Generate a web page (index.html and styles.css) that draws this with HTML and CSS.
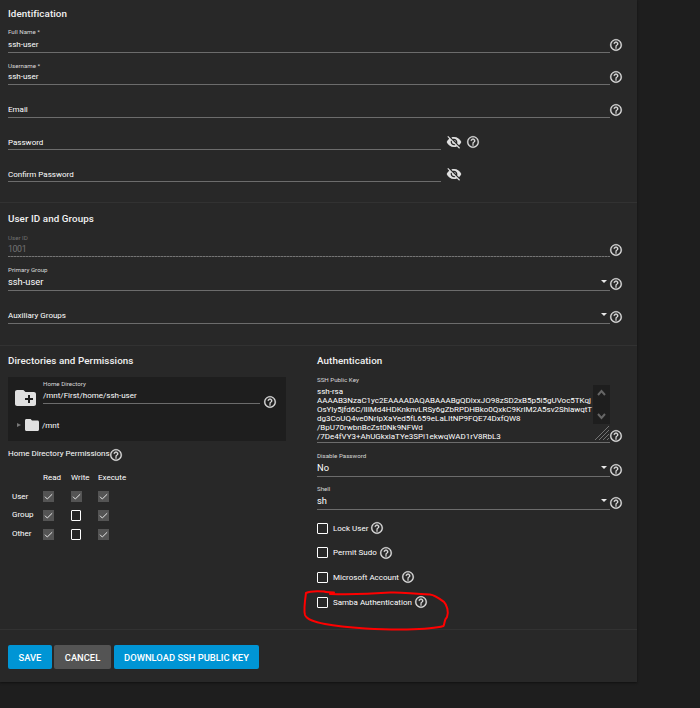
FILE: index.html
```html
<!DOCTYPE html>
<html lang="en">
<head>
<meta charset="utf-8">
<title>Edit User</title>
<link rel="stylesheet" href="styles.css">
</head>
<body>
<svg class="defs" width="0" height="0">
  <symbol id="help" viewBox="0 0 24 24"><path d="M11 18h2v-2h-2v2zm1-16C6.48 2 2 6.48 2 12s4.48 10 10 10 10-4.48 10-10S17.52 2 12 2zm0 18c-4.41 0-8-3.59-8-8s3.59-8 8-8 8 3.59 8 8-3.59 8-8 8zm0-14c-2.21 0-4 1.79-4 4h2c0-1.1.9-2 2-2s2 .9 2 2c0 2-3 1.75-3 5h2c0-2.25 3-2.5 3-5 0-2.21-1.79-4-4-4z"/></symbol>
  <symbol id="eye-off" viewBox="0 0 24 24"><path d="M12 7c2.76 0 5 2.24 5 5 0 .65-.13 1.26-.36 1.83l2.92 2.92c1.51-1.26 2.7-2.89 3.43-4.75-1.73-4.39-6-7.5-11-7.5-1.4 0-2.74.25-3.98.7l2.16 2.16C10.74 7.13 11.35 7 12 7zM2 4.27l2.28 2.28.46.46C3.08 8.3 1.78 10.02 1 12c1.73 4.39 6 7.5 11 7.5 1.55 0 3.03-.3 4.38-.84l.42.42L19.73 22 21 20.73 3.27 3 2 4.27zM7.53 9.8l1.55 1.55c-.05.21-.08.43-.08.65 0 1.66 1.34 3 3 3 .22 0 .44-.03.65-.08l1.55 1.55c-.67.33-1.41.53-2.2.53-2.76 0-5-2.24-5-5 0-.79.2-1.53.53-2.2zm4.31-.78l3.15 3.15.02-.16c0-1.66-1.34-3-3-3l-.17.01z"/></symbol>
  <symbol id="folder" viewBox="2 4 20 16" preserveAspectRatio="none"><path d="M10 4H4c-1.100 0-2 .9-2 2v12c0 1.100.9 2 2 2h16c1.100 0 2-.9 2-2V8c0-1.100-.9-2-2-2h-8l-2-2z"/></symbol>
  <symbol id="check" viewBox="0 0 11 11"><path d="M2 5.700l2.300 2.300L9.200 3.200" fill="none" stroke="#e6e6e6" stroke-width="1"/></symbol>
</svg>
<main class="card">
  <section class="section identification">
    <h2>Identification</h2>
    <div class="field f-name"><div class="control"><label>Full Name *</label><span class="value">ssh-user</span></div><svg class="help"><use href="#help"/></svg></div>
    <div class="field f-user"><div class="control"><label>Username *</label><span class="value">ssh-user</span></div><svg class="help"><use href="#help"/></svg></div>
    <div class="field f-email"><div class="control"><span class="value">Email</span></div><svg class="help"><use href="#help"/></svg></div>
    <div class="field f-pass"><div class="control short"><span class="value">Password</span></div><svg class="eye"><use href="#eye-off"/></svg><svg class="help"><use href="#help"/></svg></div>
    <div class="field f-pass"><div class="control short"><span class="value">Confirm Password</span></div><svg class="eye"><use href="#eye-off"/></svg></div>
  </section>

  <section class="section groups">
    <h2>User ID and Groups</h2>
    <div class="field f-uid disabled"><div class="control"><label>User ID</label><span class="value">1001</span></div><svg class="help"><use href="#help"/></svg></div>
    <div class="field f-primary select"><div class="control"><label>Primary Group</label><span class="value">ssh-user</span><i class="caret"></i></div><svg class="help"><use href="#help"/></svg></div>
    <div class="field f-aux select"><div class="control"><span class="value placeholder">Auxiliary Groups</span><i class="caret"></i></div><svg class="help"><use href="#help"/></svg></div>
  </section>

  <section class="section columns">
    <div class="left">
      <h2>Directories and Permissions</h2>
      <div class="explorer">
        <div class="home">
          <div class="folder-add"><svg class="folder-lg"><use href="#folder"/></svg><i class="plus"></i></div>
          <div class="home-control"><label>Home Directory</label><span class="value">/mnt/First/home/ssh-user</span></div>
          <svg class="help"><use href="#help"/></svg>
        </div>
        <div class="node"><i class="expand"></i><svg class="folder-sm"><use href="#folder"/></svg><span>/mnt</span></div>
      </div>
      <div class="perm-title"><span>Home Directory Permissions</span><svg class="help"><use href="#help"/></svg></div>
      <div class="perms">
        <span></span><b>Read</b><b>Write</b><b>Execute</b>
        <span>User</span><i class="box on"><svg><use href="#check"/></svg></i><i class="box on"><svg><use href="#check"/></svg></i><i class="box on"><svg><use href="#check"/></svg></i>
        <span class="up">Group</span><i class="box on"><svg><use href="#check"/></svg></i><i class="box"></i><i class="box on"><svg><use href="#check"/></svg></i>
        <span class="up">Other</span><i class="box on"><svg><use href="#check"/></svg></i><i class="box"></i><i class="box on"><svg><use href="#check"/></svg></i>
      </div>
    </div>
    <div class="right">
      <h2>Authentication</h2>
      <div class="field f-ssh">
        <div class="control">
          <label>SSH Public Key</label>
          <div class="key"><span>ssh-rsa</span><span>AAAAB3NzaC1yc2EAAAADAQABAAABgQDlxxJO98zSD2xB5p5i5gUVoc5TKqj</span><span class="long">OsYIy5jfd6C/lIIMd4HDKnknvLRSy6gZbRPDHBko0QxkC9KrlM2A5sv2ShiawqtT</span><span>dg3CoUQ4ve0NrIpXaYed5fL659eLaLItNP9FQE74DxfQW8</span><span>/BpU70rwbnBcZst0Nk9NFWd</span><span>/7De4fVY3+AhUGkxiaTYe3SPi1ekwqWAD1rV8RbL3</span></div>
          <div class="scroll"><svg viewBox="0 0 17 18"><path d="M5 10l3.500-4 3.500 4"/></svg><svg viewBox="0 0 17 18"><path d="M5 8l3.500 4L12 8"/></svg></div>
          <svg class="grip" viewBox="0 0 15 15"><path d="M0 14L14 0M4 14L14 4M8 14L14 8M12 14L14 12"/></svg>
        </div>
        <svg class="help"><use href="#help"/></svg>
      </div>
      <div class="field f-disable select"><div class="control"><label>Disable Password</label><span class="value">No</span><i class="caret"></i></div><svg class="help"><use href="#help"/></svg></div>
      <div class="field f-shell select"><div class="control"><label>Shell</label><span class="value">sh</span><i class="caret"></i></div><svg class="help"><use href="#help"/></svg></div>
      <div class="options">
        <div class="option"><i class="box"></i><span>Lock User</span><svg class="help"><use href="#help"/></svg></div>
        <div class="option"><i class="box"></i><span>Permit Sudo</span><svg class="help"><use href="#help"/></svg></div>
        <div class="option"><i class="box"></i><span>Microsoft Account</span><svg class="help"><use href="#help"/></svg></div>
        <div class="option"><i class="box"></i><span>Samba Authentication</span><svg class="help"><use href="#help"/></svg>
          <svg class="scribble" viewBox="300 585 152 50"><path d="M334 592.500C330 592 326 592.500 324 591.500C318 591 310 591 306 593C305 600 303.500 610 305 615C307 620 315 622 325 624C345 628 385 630 407 629.500C425 629 440 627 443.500 626C445 623 444 620 447 617C449 612 447 605 444 602C440 599 435 595 430 594.500C405 593 400 592 390 592.500C370 594 345 594.500 330 594"/></svg>
        </div>
      </div>
    </div>
  </section>

  <footer class="actions">
    <button class="save">SAVE</button><button class="cancel">CANCEL</button><button class="download">DOWNLOAD SSH PUBLIC KEY</button>
  </footer>
</main>
</body>
</html>
```
FILE: styles.css
```css
* { box-sizing: border-box; }
body { margin: 0; height: 708px; background: #1e1e1e; color: #fff; font: 8px/10px Roboto, sans-serif; overflow: hidden; }
svg { fill: #e0e0e0; flex: none; }
.defs { position: absolute; }
.card { width: 637px; height: 682px; background: #282828; box-shadow: 0 1px 2px #111; }
.section { padding: 0 8px; border-bottom: 1px solid #323232; }
.identification { height: 203px; }
.groups { height: 143px; }
.columns { height: 284px; display: grid; grid-template-columns: 309px 1fr; }
h2 { margin: 0; color: #f2f2f2; font-size: 9.800px; letter-spacing: .08px; line-height: 12px; font-weight: 500; white-space: nowrap; }
.identification h2 { padding-top: 8px; height: 21px; }
.groups h2 { padding-top: 10px; height: 25px; }
.columns h2 { padding-top: 9px; height: 31px; }

.field { display: flex; align-items: flex-end; }
.control { position: relative; width: 602px; height: 100%; display: flex; flex-direction: column; justify-content: flex-end; border-bottom: 1px solid #6c6c6c; }
.control.short { width: 433px; }
.right .control { width: 293px; }
label { font-size: 6.200px; line-height: 8px; color: #d8d8d8; white-space: nowrap; }
.value { display: block; line-height: 10px; margin-bottom: 2px; white-space: nowrap; }
.control label { margin-bottom: 3px; }
.help { width: 14px; height: 14px; margin: 0 0 .5px -.7px; stroke: #e0e0e0; stroke-width: .4; }
.identification .help { margin-bottom: 1px; }
.eye { width: 16px; height: 16px; margin: 0 5px 0 5px; }
.f-name { height: 32px; }
.f-name .control label { margin-bottom: 4px; }
.f-user { height: 32px; }
.f-user .control label { margin-bottom: 2px; }
.f-email { height: 33px; }
.f-pass { height: 32px; }
.f-pass .value { margin-bottom: 1px; }
.f-uid { height: 29px; }
.f-uid .control { border-bottom: 0; padding-bottom: 1px; background: repeating-linear-gradient(90deg, #747474 0 2px, #505050 2px 3px) bottom/100% 1px no-repeat; }
.f-uid .control label { margin-bottom: 2px; }
.disabled label { color: #707070; }
.disabled .value { color: #747474; font-size: 8.800px; letter-spacing: -.4px; margin-bottom: 2px; }
.f-primary { height: 34px; }
.f-aux { height: 33px; }
.select .value { font-size: 9.300px; margin-bottom: 3px; }
.select .placeholder { font-size: 8px; margin-bottom: 2px; }
.caret { position: absolute; right: 3px; bottom: 7px; border: 3px solid transparent; border-top-color: #e8e8e8; border-bottom: 0; }

.explorer { width: 278px; height: 64px; background: #1e1e1e; padding-left: 7px; }
.home { height: 27px; display: flex; align-items: flex-end; }
.folder-add { position: relative; width: 21px; height: 16px; margin: 0 7px -1.500px 0; }
.folder-lg { width: 21px; height: 16px; display: block; }
.plus { position: absolute; left: 10px; top: 5px; width: 8px; height: 8px; background: linear-gradient(#1e1e1e, #1e1e1e) 3px 0/2px 8px no-repeat, linear-gradient(#1e1e1e, #1e1e1e) 0 3px/8px 2px no-repeat; }
.home-control { width: 217px; display: flex; flex-direction: column; border-bottom: 1px solid #6c6c6c; }
.home-control label { margin-bottom: 3px; }
.home-control .value { margin-bottom: 2px; }
.home .help { margin: 0 0 -5px 3px; }
.node { display: flex; align-items: center; height: 16px; margin-top: 13px; padding-left: 2px; }
.node span { padding-top: 1px; }
.expand { border: 2.500px solid transparent; border-left: 4px solid #777; border-right: 0; margin-right: 4px; }
.folder-sm { width: 14px; height: 12px; margin-right: 3px; }
.perm-title { display: flex; align-items: center; height: 26px; white-space: nowrap; }
.perm-title .help { margin: 1px 0 0 -1px; }
.perms { display: grid; grid-template-columns: 31px 28px 27px 30px; grid-template-rows: 20px 19px 19px 19px; align-items: center; padding-left: 4px; }
.perms b { font-weight: 400; padding-top: 1px; }
.perms .up { padding-bottom: 2px; }
.box { display: block; width: 11px; height: 11px; border: 1px solid #fff; border-radius: 1px; }
.perms .box:not(.on) { width: 10px; }
.box.on { border: 0; border-radius: 0; background: #545454; }
.box svg { display: block; width: 11px; height: 11px; }

.f-ssh { height: 66px; }
.f-ssh .control label { margin-bottom: 3px; }
.key { display: flex; flex-direction: column; line-height: 9px; margin-bottom: 1px; }
.key span { white-space: nowrap; }
.key .long { letter-spacing: -.03px; }
.scroll { position: absolute; right: 0; top: 8px; width: 17px; height: 39px; background: #1e1e1e; display: flex; flex-direction: column; justify-content: space-between; }
.scroll svg { width: 17px; height: 18px; fill: none; stroke: #666; stroke-width: 2; }
.grip { position: absolute; right: 0; bottom: 1px; width: 15px; height: 15px; stroke: #888; stroke-width: .8; }
.f-disable { height: 34px; }
.f-shell { height: 33px; }
.options { padding-top: 6px; }
.option { position: relative; display: flex; align-items: center; height: 24.600px; white-space: nowrap; }
.option span { padding-top: 1px; }
.option .box { margin-right: 5px; }
.option .help { margin: 0 0 0 2px; }
.scribble { position: absolute; left: -17px; top: -5px; width: 152px; height: 50px; fill: none; stroke: #f00; stroke-width: 2; stroke-linecap: round; stroke-linejoin: round; }

.actions { display: flex; padding: 15px 8px 0; }
button { height: 24px; border: 0; border-radius: 2px; padding: 1px 0 0; color: #fff; background: #0095d5; font: 500 9.400px/23px Roboto, sans-serif; white-space: nowrap; }
.save { width: 44px; margin-right: 2px; }
.cancel { width: 57px; margin-right: 3px; background: #545454; }
.download { width: 145px; }
```
